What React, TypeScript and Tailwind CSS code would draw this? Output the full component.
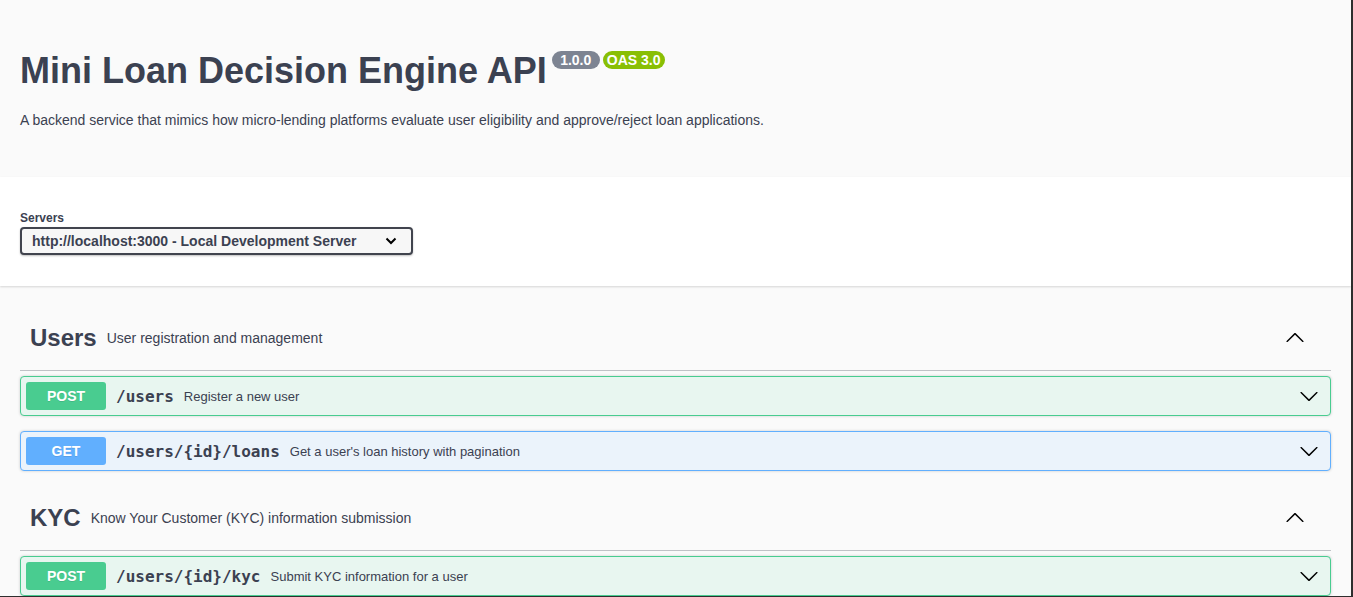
import React from "react";

const SANS = "font-['Liberation_Sans',Arial,sans-serif]";
const MONO = "font-['DejaVu_Sans_Mono',monospace]";

type Op = {
    method: "POST" | "GET";
    path: string;
    summary: string;
};

type Tag = {
    name: string;
    description: string;
    ops: Op[];
};

const tags: Tag[] = [
    {
        name: "Users",
        description: "User registration and management",
        ops: [
            { method: "POST", path: "/users", summary: "Register a new user" },
            { method: "GET", path: "/users/{id}/loans", summary: "Get a user's loan history with pagination" },
        ],
    },
    {
        name: "KYC",
        description: "Know Your Customer (KYC) information submission",
        ops: [{ method: "POST", path: "/users/{id}/kyc", summary: "Submit KYC information for a user" }],
    },
];

const Arrow = ({ up = false }: { up?: boolean }) => (
    <svg width="20" height="20" viewBox="0 0 20 20" className={up ? "rotate-180" : ""}>
        <path
            fill="#000"
            d="M17.418 6.109c.272-.268.709-.268.979 0s.271.701 0 .969l-7.908 7.83c-.27.268-.707.268-.979 0l-7.908-7.83c-.27-.268-.27-.701 0-.969.271-.268.709-.268.979 0L10 13.25l7.418-7.141z"
        />
    </svg>
);

const OpRow = ({ op }: { op: Op }) => {
    const isPost = op.method === "POST";
    return (
        <div
            className={`mb-[15px] flex h-[40px] items-center rounded-[4px] border p-[5px] shadow-[0_0_3px_rgba(0,0,0,0.19)] ${
                isPost ? "border-[#49cc90] bg-[#e8f6f0]" : "border-[#61affe] bg-[#ebf3fb]"
            }`}
        >
            <span
                className={`flex h-[28px] w-[80px] items-center justify-center rounded-[3px] text-[14px] font-bold text-white [text-shadow:0_1px_0_rgba(0,0,0,0.1)] ${
                    isPost ? "bg-[#49cc90]" : "bg-[#61affe]"
                }`}
            >
                {op.method}
            </span>
            <span className={`${MONO} px-[10px] pt-px text-[16px] font-bold text-[#3b4151]`}>{op.path}</span>
            <span className="flex-1 pt-px text-[13px] text-[#3b4151]">{op.summary}</span>
            <span className="mr-[6px] flex">
                <Arrow />
            </span>
        </div>
    );
};

export default function App() {
    return (
        <div className={`${SANS} h-[597px] w-full overflow-hidden border-r-2 border-b border-[#2e2e2e] bg-[#fafafa] text-[#3b4151]`}>
            {/* info */}
            <div className="px-5 pt-[50px] pb-[49px]">
                <div className="flex items-start">
                    <h2 className="text-[36px] font-bold leading-[41px] text-[#3b4151]">Mini Loan Decision Engine API</h2>
                    <span className="mt-[1px] ml-[5px] flex h-[18px] w-[48px] items-center justify-center rounded-full bg-[#7d8492] text-[14px] font-bold text-white">
                        1.0.0
                    </span>
                    <span className="mt-[1px] ml-[3px] flex h-[18px] w-[62px] items-center justify-center rounded-full bg-[#89bf04] text-[14px] font-bold text-white">
                        OAS 3.0
                    </span>
                </div>
                <p className="mt-[21px] text-[14px] leading-4">
                    A backend service that mimics how micro-lending platforms evaluate user eligibility and approve/reject loan applications.
                </p>
            </div>

            {/* servers */}
            <div className="bg-white px-5 pt-[34px] pb-[31px] shadow-[0_1px_2px_0_rgba(0,0,0,0.15)]">
                <div className="text-[12px] font-bold leading-[14px]">Servers</div>
                <div className="mt-[2px] flex h-[28px] w-[393px] items-center justify-between rounded-[4px] border-2 border-[#41444e] bg-[#f7f7f7] pl-[10px] pr-[14px] shadow-[0_1px_2px_0_rgba(0,0,0,0.25)]">
                    <span className="text-[14px] font-bold">http://localhost:3000 - Local Development Server</span>
                    <svg width="12" height="8" viewBox="0 0 12 8">
                        <polyline points="1.5,1.5 6,6 10.5,1.5" fill="none" stroke="#000" strokeWidth="2" />
                    </svg>
                </div>
            </div>

            {/* operations */}
            <div className="mt-5 px-5">
                {tags.map((tag) => (
                    <div key={tag.name}>
                        <div className="mb-[5px] flex h-[65px] items-center border-b border-[rgba(59,65,81,0.3)] pl-[10px] pr-[26px]">
                            <span className="text-[24px] font-bold">{tag.name}</span>
                            <span className="ml-[10px] flex-1 text-[14px]">{tag.description}</span>
                            <Arrow up />
                        </div>
                        {tag.ops.map((op) => (
                            <OpRow key={op.method + op.path} op={op} />
                        ))}
                    </div>
                ))}
            </div>
        </div>
    );
}
